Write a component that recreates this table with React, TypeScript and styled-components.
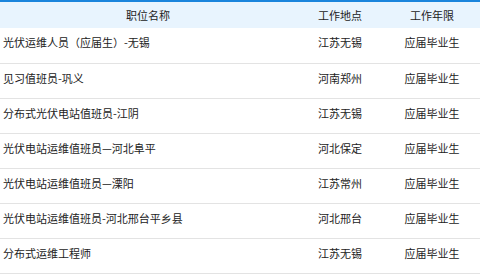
import React from "react";
import styled, { createGlobalStyle } from "styled-components";

const Global = createGlobalStyle`
  html, body { margin: 0; padding: 0; background: #ffffff; }
  body {
    font-family: "Noto Sans CJK SC", "Microsoft YaHei", sans-serif;
    font-size: 11px;
    color: #333333;
  }
`;

const Table = styled.div`
  width: 480px;
  display: flex;
  flex-direction: column;
`;

const HeaderRow = styled.div`
  display: grid;
  grid-template-columns: 296px 88px 96px;
  height: 26px;
  align-items: center;
  border-top: 2px solid #1a84dc;
  background: #e8f4fe;
  color: #222222;
`;

const HeadCell = styled.div`
  text-align: center;
  line-height: 16px;
`;

const Row = styled.div<{ $first?: boolean }>`
  display: grid;
  grid-template-columns: 296px 88px 96px;
  height: ${(p) => (p.$first ? "30px" : "29px")};
  border-bottom: 1px solid #e3e3e3;
  align-items: start;
  padding-top: 5px;
  box-sizing: content-box;
`;

const Cell = styled.div<{ $align?: "left" | "center" }>`
  text-align: ${(p) => p.$align ?? "center"};
  padding-left: ${(p) => (p.$align === "left" ? "3px" : "0")};
  line-height: 18px;
  white-space: nowrap;
  color: #222222;
`;

const rows = [
  { title: "光伏运维人员（应届生）-无锡", place: "江苏无锡", years: "应届毕业生" },
  { title: "见习值班员-巩义", place: "河南郑州", years: "应届毕业生" },
  { title: "分布式光伏电站值班员-江阴", place: "江苏无锡", years: "应届毕业生" },
  { title: "光伏电站运维值班员—河北阜平", place: "河北保定", years: "应届毕业生" },
  { title: "光伏电站运维值班员—溧阳", place: "江苏常州", years: "应届毕业生" },
  { title: "光伏电站运维值班员-河北邢台平乡县", place: "河北邢台", years: "应届毕业生" },
  { title: "分布式运维工程师", place: "江苏无锡", years: "应届毕业生" },
];

export default function App() {
  return (
    <>
      <Global />
      <Table>
        <HeaderRow>
          <HeadCell>职位名称</HeadCell>
          <HeadCell>工作地点</HeadCell>
          <HeadCell>工作年限</HeadCell>
        </HeaderRow>
        {rows.map((r, i) => (
          <Row key={i} $first={i === 0}>
            <Cell $align="left">{r.title}</Cell>
            <Cell>{r.place}</Cell>
            <Cell>{r.years}</Cell>
          </Row>
        ))}
      </Table>
    </>
  );
}
